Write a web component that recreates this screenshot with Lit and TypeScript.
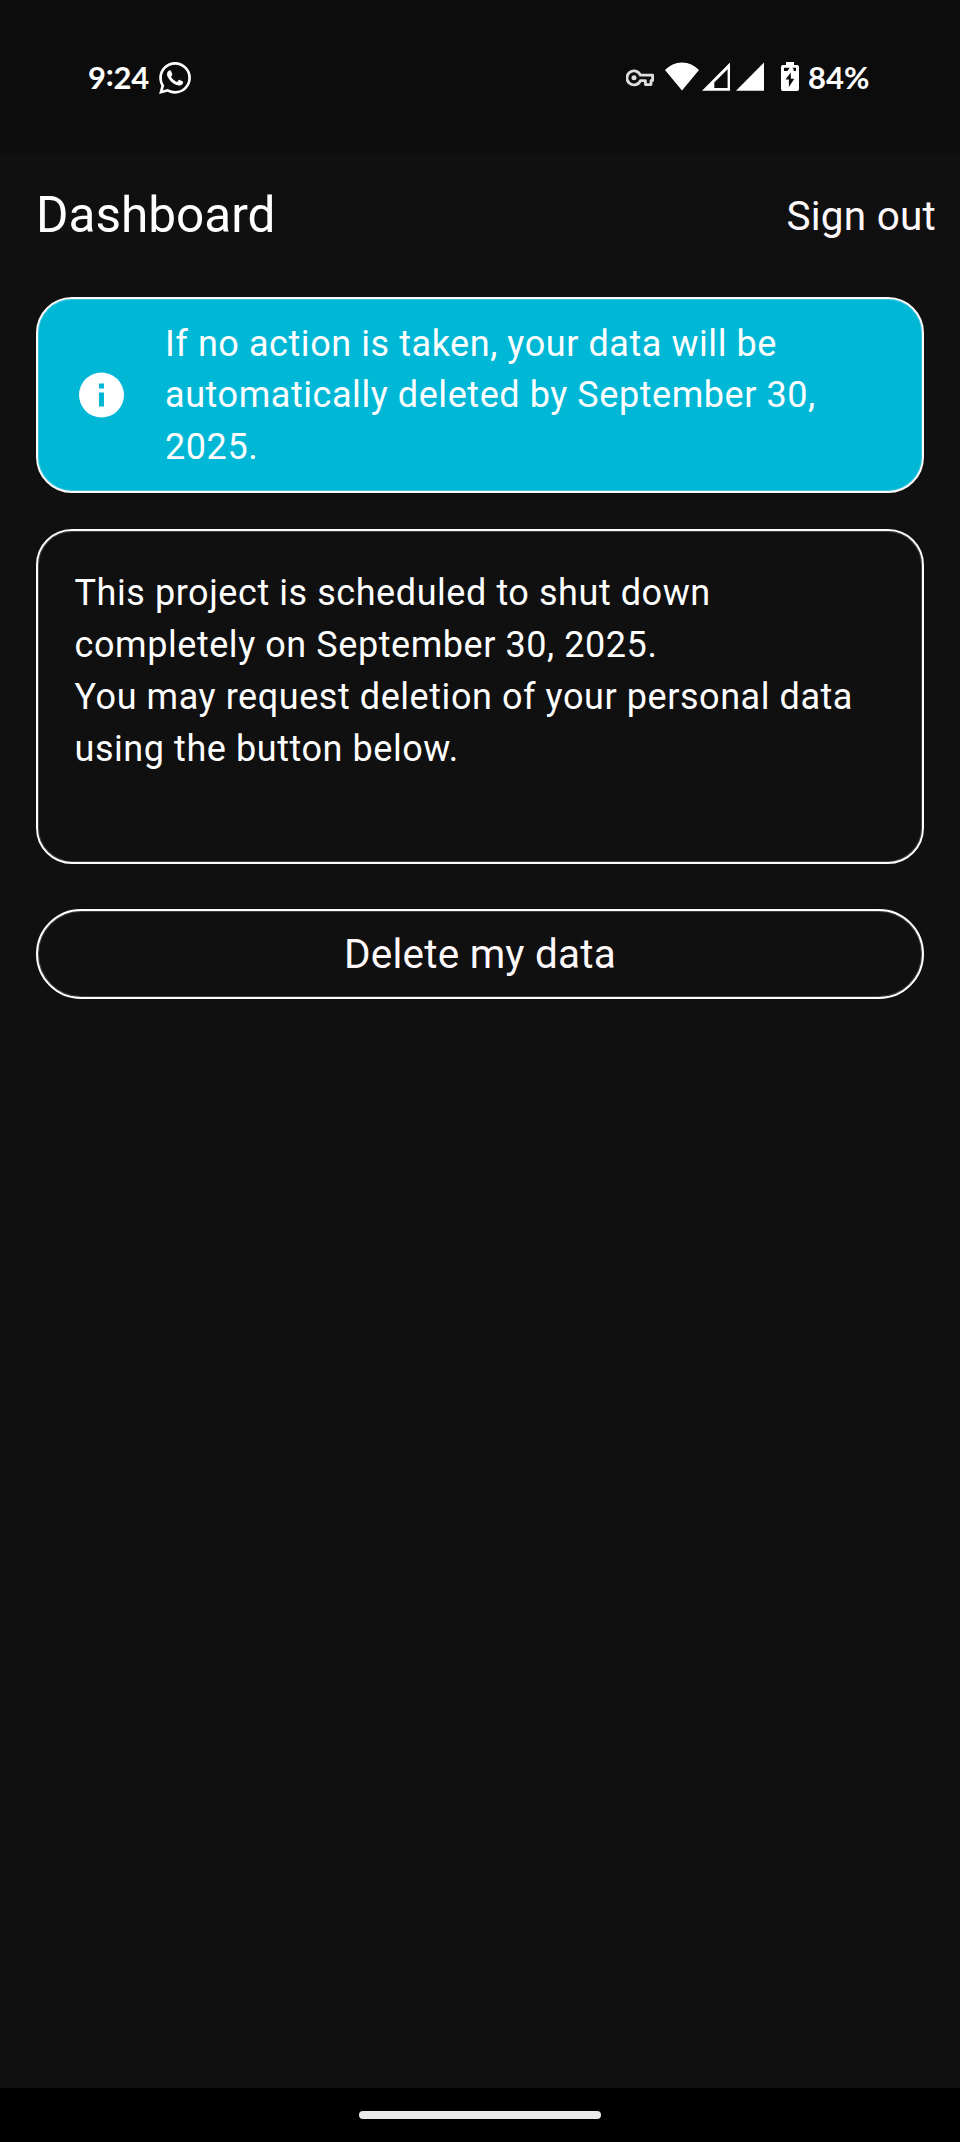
import { LitElement, html, css } from "lit";
import { customElement } from "lit/decorators.js";

@customElement("status-bar")
class StatusBar extends LitElement {
  static styles = css`
    :host { display: flex; justify-content: space-between; align-items: center; height: 153px; box-sizing: border-box; padding: 0 90px 0 88px; background: #0c0c0c; color: #fff; font-family: Lato, "Open Sans", sans-serif; font-weight: 700; letter-spacing: 0; }
    .group { display: flex; align-items: center; }
    svg { display: block; flex: none; }
    .time { font-size: 31px; line-height: 40px; width: 71px; letter-spacing: -.2px; }
    .colon { vertical-align: 3px; line-height: 1; }
    .chat { margin-top: 3px; }
    .key { margin: 2px 11px 0 0; }
    .wifi { margin-right: 3px; }
    .sim { margin-right: 6px; }
    .signal { margin-right: 17px; }
    .battery { margin-right: 9px; }
    .percent { font-size: 31px; line-height: 40px; width: 62px; white-space: nowrap; }
  `;
  render() {
    return html`
      <div class="group">
        <span class="time">9<span class="colon">:</span>24</span>
        <svg class="chat" width="32" height="32" viewBox="0 0 24 24" fill="#fff"><path d="M17.5 14.4c-.3-.15-1.77-.87-2.04-.97-.27-.1-.47-.15-.67.15-.2.3-.77.97-.94 1.16-.18.2-.35.22-.65.08-.3-.15-1.26-.46-2.4-1.48-.88-.79-1.48-1.76-1.65-2.06-.17-.3 0-.46.13-.6.13-.14.3-.35.45-.53.15-.17.2-.3.3-.5.1-.2.05-.37-.03-.52-.07-.15-.67-1.6-.91-2.2-.24-.58-.49-.5-.67-.51h-.57c-.2 0-.52.07-.8.37-.27.3-1.04 1.02-1.04 2.48s1.07 2.88 1.22 3.07c.15.2 2.1 3.2 5.08 4.49.7.3 1.26.49 1.7.63.7.22 1.35.19 1.86.12.57-.1 1.75-.72 2-1.42.24-.7.24-1.3.17-1.41-.07-.13-.27-.2-.57-.35m-5.44 7.4a9.9 9.9 0 0 1-5.03-1.37l-.36-.22-3.74.98 1-3.64-.24-.38a9.86 9.86 0 0 1-1.5-5.25c0-5.45 4.43-9.88 9.88-9.88a9.88 9.88 0 0 1 0 19.76m8.4-18.3A11.8 11.8 0 0 0 12.06 0C5.5 0 .16 5.33.16 11.9c0 2.1.55 4.14 1.6 5.94L.05 24l6.3-1.65a11.9 11.9 0 0 0 5.7 1.45c6.55 0 11.88-5.34 11.9-11.9a11.8 11.8 0 0 0-3.5-8.4"/></svg>
      </div>
      <div class="group">
        <svg class="key" width="28" height="18" viewBox="0 0 28 18" fill="none" stroke="#dedede" stroke-width="2.8" stroke-linejoin="round"><path d="M14.4 6.2H26.6V11.6H25V15.6H19.4V11.6H14.4A7 7 0 1 1 14.4 6.2Z"/><circle cx="8" cy="8.8" r="2.5" fill="#dedede" stroke="none"/></svg>
        <svg class="wifi" width="34" height="29" viewBox="0 0 34 29" fill="#fff"><path d="M17 28.6 0 8C4.400 3.400 10.400 .4 17 .4S29.600 3.400 34 8Z"/></svg>
        <svg class="sim" width="28" height="29" viewBox="0 0 28 29" fill="#fff"><path fill-rule="evenodd" d="M28 .4V28.700H0ZM25.600 7.200 12.300 20.400V26H25.600Z"/></svg>
        <svg class="signal" width="28" height="29" viewBox="0 0 28 29" fill="#fff"><path d="M28 .4V28.700H0Z"/></svg>
        <svg class="battery" width="18" height="29" viewBox="0 0 18 29"><path fill="#fff" d="M5 0H13V3H16Q18 3 18 5V27Q18 29 16 29H2Q0 29 0 27V5Q0 3 2 3H5Z"/><path fill="#0c0c0c" d="M9.800 10.500 4.500 17.600H7.900V25L13.300 16.800H9.800ZM3 5.700H8.600L6.500 9H3ZM11.400 5.700H15V9H12.600V7.300Z"/></svg>
        <span class="percent">84%</span>
      </div>`;
  }
}

@customElement("app-root")
class AppRoot extends LitElement {
  static styles = css`
    :host { display: flex; flex-direction: column; width: 960px; height: 2142px; background: #101010; color: #fff; font-family: Roboto, sans-serif; font-size: 36px; line-height: 52px; letter-spacing: .5625px; }
    .bar { display: flex; justify-content: space-between; align-items: center; height: 126px; padding: 0 24px 0 36px; }
    h1 { margin: 0; padding-bottom: 2px; font-weight: 400; font-size: 49.5px; line-height: 60px; letter-spacing: 0; }
    .signout { font: inherit; font-size: 40.5px; letter-spacing: .225px; color: #fff8fb; background: none; border: 0; padding: 0; }
    main { display: flex; flex-direction: column; flex: 1; padding: 18px 36px 0; }
    .alert, .notice { box-sizing: border-box; border: 2px solid #fffafc; border-radius: 36px; }
    .alert { display: flex; align-items: center; gap: 41px; height: 196px; padding: 0 36px 0 40px; background: #00b8d6; box-shadow: inset 0 0 0 1px rgba(255,255,255,.2); }
    .alert svg { flex: none; }
    .alert p { line-height: 51.5px; padding-top: 2px; }
    p { margin: 0; }
    .notice { height: 335px; margin-top: 36px; padding: 36px 36px 0 36.500px; box-shadow: inset 0 0 0 1px rgba(255,255,255,.2); }
    .delete { height: 90px; margin-top: 45px; border: 2px solid #fff; border-radius: 45px; background: none; color: #fff8fb; font: inherit; font-size: 40.5px; letter-spacing: .225px; padding: 0; box-shadow: inset 0 0 0 1px rgba(255,255,255,.2); }
    .nav { display: flex; justify-content: center; align-items: center; height: 54px; background: #000; }
    .handle { width: 242px; height: 8px; border-radius: 4px; background: #ebebeb; }
  `;
  render() {
    return html`
      <status-bar></status-bar>
      <header class="bar"><h1>Dashboard</h1><button class="signout">Sign out</button></header>
      <main>
        <section class="alert">
          <svg width="46" height="46" viewBox="0 0 46 46"><circle cx="23.500" cy="23" r="22.500" fill="#fff"/><path fill="#00b8d6" d="M21 11.500h5v5h-5zM21 20.500h5v14h-5z"/></svg>
          <p>If no action is taken, your data will be automatically deleted by September 30, 2025.</p>
        </section>
        <section class="notice">
          <p>This project is scheduled to shut down completely on September 30, 2025.</p>
          <p>You may request deletion of your personal data using the button below.</p>
        </section>
        <button class="delete">Delete my data</button>
      </main>
      <footer class="nav"><div class="handle"></div></footer>`;
  }
}
